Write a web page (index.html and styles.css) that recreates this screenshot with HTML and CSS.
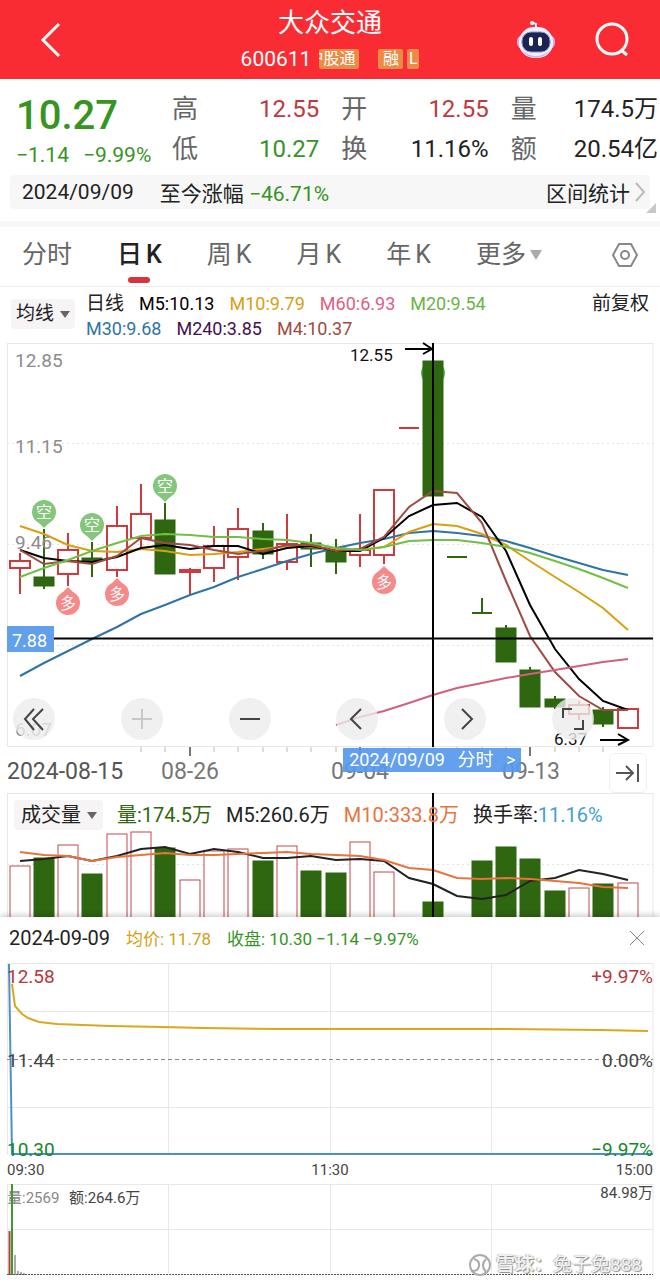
FILE: index.html
```html
<!DOCTYPE html>
<html lang="zh-CN">
<head>
    <meta charset="UTF-8">
    <meta name="viewport" content="width=device-width, initial-scale=1.0">
    <title>大众交通 600611</title>
    <link rel="stylesheet" href="styles.css">
</head>
<body>
    <header class="topbar">
        <button class="icon-btn back" aria-label="返回">
            <svg width="22" height="36" viewBox="0 0 22 36"><path d="M19 2 L3 18 L19 34" fill="none" stroke="#fff" stroke-width="3"/></svg>
        </button>
        <div class="title">
            <h1>大众交通</h1>
            <div class="code">
                <span>600611</span>
                <span class="tag tag-first">沪股通</span>
                <span class="tag">融</span>
                <span class="tag tag-last">L</span>
            </div>
        </div>
        <div class="actions">
            <button class="icon-btn" aria-label="智能助手">
                <svg width="40" height="40" viewBox="0 0 40 40">
                    <path d="M20 9 L20 4 L17 3" fill="none" stroke="#f3eaff" stroke-width="2"/>
                    <circle cx="16" cy="3" r="2" fill="#fff"/>
                    <rect x="1" y="15" width="38" height="14" rx="6" fill="#c5b4f2"/>
                    <rect x="3" y="7" width="34" height="31" rx="15" fill="#f4effd"/>
                    <path d="M6 30 Q20 42 34 30 Q28 38 20 38 Q11 38 6 30" fill="#c9bdf0"/>
                    <rect x="6" y="12" width="28" height="20" rx="9" fill="#1c2450" stroke="#8c8fdc"/>
                    <rect x="13" y="17" width="4" height="9" rx="2" fill="#fff"/>
                    <rect x="22" y="17" width="4" height="9" rx="2" fill="#fff"/>
                </svg>
            </button>
            <button class="icon-btn" aria-label="搜索">
                <svg width="36" height="36" viewBox="0 0 36 36"><circle cx="18" cy="17" r="15" fill="none" stroke="#fff" stroke-width="3"/><path d="M27 28 L33 33" stroke="#fff" stroke-width="3"/></svg>
            </button>
        </div>
    </header>

    <section class="quote">
        <div class="price">
            <strong>10.27</strong>
            <div class="change"><span>−1.14</span><span>−9.99%</span></div>
        </div>
        <dl>
            <div><dt>高</dt><dd class="up">12.55</dd></div>
            <div><dt>开</dt><dd class="up">12.55</dd></div>
            <div><dt>量</dt><dd>174.5万</dd></div>
            <div><dt>低</dt><dd class="down">10.27</dd></div>
            <div><dt>换</dt><dd>11.16%</dd></div>
            <div><dt>额</dt><dd>20.54亿</dd></div>
        </dl>
    </section>

    <div class="interval">
        <span>2024/09/09</span>
        <span class="since">至今涨幅 <b class="down">−46.71%</b></span>
        <a href="#stats">区间统计<svg width="12" height="22" viewBox="0 0 12 22"><path d="M2 2 L10 11 L2 20" fill="none" stroke="#bbb" stroke-width="2"/></svg></a>
        <i class="corner"></i>
    </div>

    <nav class="tabs">
        <button>分时</button>
        <button class="active"><span>日</span><span>K</span></button>
        <button><span>周</span><span>K</span></button>
        <button><span>月</span><span>K</span></button>
        <button><span>年</span><span>K</span></button>
        <button>更多<i class="caret"></i></button>
        <button class="settings" aria-label="设置">
            <svg width="28" height="28" viewBox="0 0 28 28" fill="none" stroke="#888" stroke-width="2"><path d="M8 3 H20 L26 14 L20 25 H8 L2 14 Z"/><circle cx="14" cy="14" r="4"/></svg>
        </button>
    </nav>

    <section class="legend">
        <button class="picker">均线<i class="caret"></i></button>
        <div class="averages">
            <span class="cycle">日线</span>
            <span class="m5">M5:10.13</span>
            <span class="m10">M10:9.79</span>
            <span class="m60">M60:6.93</span>
            <span class="m20">M20:9.54</span>
            <span class="m30">M30:9.68</span>
            <span class="m240">M240:3.85</span>
            <span class="m4">M4:10.37</span>
        </div>
        <span class="adjust">前复权</span>
    </section>

    <section class="kline">
        <svg class="chart" id="kline" viewBox="0 0 660 451"></svg>
        <div class="zoombar">
            <button aria-label="最早"><svg viewBox="0 0 42 42"><path d="M21 11 L12 21 L21 32 M30 11 L20 21 L30 32"/></svg></button>
            <button aria-label="放大" class="off"><svg viewBox="0 0 42 42"><path d="M11 21 H31 M21 11 V31"/></svg></button>
            <button aria-label="缩小"><svg viewBox="0 0 42 42"><path d="M11 21 H31"/></svg></button>
            <button aria-label="前一日"><svg viewBox="0 0 42 42"><path d="M25 11 L15 21 L25 31"/></svg></button>
            <button aria-label="后一日"><svg viewBox="0 0 42 42"><path d="M18 11 L28 21 L18 31"/></svg></button>
            <button aria-label="全屏"><svg viewBox="0 0 42 42"><path d="M11 20 V11 H20 M31 22 V31 H22"/></svg></button>
        </div>
        <button class="day-link"><span>2024/09/09</span><span>分时</span><span>&gt;</span></button>
        <button class="to-end" aria-label="最新"><svg width="28" height="24" viewBox="0 0 28 24" fill="none" stroke="#555" stroke-width="2"><path d="M2 12 H18 M12 5 L19 12 L12 19 M24 3 V21"/></svg></button>
    </section>

    <section class="volume">
        <svg class="chart" id="volume" viewBox="0 0 660 124"></svg>
        <div class="volume-legend">
            <button class="picker">成交量<i class="caret"></i></button>
            <span class="vol">量:174.5万</span>
            <span>M5:260.6万</span>
            <span class="vm10">M10:333.8万</span>
            <span>换手率:<b class="rate">11.16%</b></span>
        </div>
    </section>

    <section class="intraday">
        <div class="intraday-head">
            <span class="day">2024-09-09</span>
            <span class="m10">均价: 11.78</span>
            <span class="down">收盘: 10.30 −1.14 −9.97%</span>
            <button aria-label="关闭"><svg width="16" height="16" viewBox="0 0 16 16"><path d="M1 1 L15 15 M15 1 L1 15" stroke="#888" stroke-width="1"/></svg></button>
        </div>
        <svg class="chart" viewBox="0 0 660 198">
            <path class="frame" d="M7 3.5 H653 M7 51.5 H653 M7 147.5 H653 M7.5 3 V195 M168.5 3 V195 M330.5 3 V195 M491.5 3 V195 M653 3 V195"/>
            <path d="M7 99.5 H653" stroke="#888" stroke-dasharray="4 3"/>
            <polyline class="line" stroke="#d8a81f" points="12,24 15,46 22,54 28,58 39,62 57,64 83,65 110,66 163,67 203,68 277,69 503,69 600,70 648,71"/>
            <polyline class="line" stroke="#4d90c8" points="9,4 12,194 653,194"/>
            <text class="scale up" x="7" y="23">12.58</text>
            <text class="scale" x="7" y="107">11.44</text>
            <text class="scale low" x="7" y="196">10.30</text>
            <text class="scale up end" x="653" y="23">+9.97%</text>
            <text class="scale end" x="653" y="107">0.00%</text>
            <text class="scale low end" x="653" y="196">−9.97%</text>
        </svg>
        <div class="times"><span>09:30</span><span>11:30</span><span>15:00</span></div>
        <div class="turnover">
            <svg class="chart" viewBox="0 0 660 94">
                <path class="frame" d="M7 2.5 H653 M7 47.5 H653 M7.5 2 V92 M168.5 2 V92 M330.5 2 V92 M491.5 2 V92 M653 2 V92"/>
                <path d="M7 92.5 H653" stroke="#555" stroke-dasharray="2 1"/>
                <path d="M9.5 49 V93" stroke="#b0413a" stroke-width="2"/>
                <path d="M15 73 V93 M18 89 V93 M21 90 V93 M24 91 V93" stroke="#555" stroke-width="1"/>
                <text class="note dim" x="7" y="21">量:2569</text>
                <text class="note" x="69" y="21">额:264.6万</text>
                <text class="note end" x="653" y="16">84.98万</text>
                <path d="M12 2 V93" stroke="#3d9a2c" stroke-width="2"/>
            </svg>
            <div class="watermark">
                <svg width="24" height="24" viewBox="0 0 24 24" fill="none" stroke="#aaa" stroke-width="2"><circle cx="12" cy="12" r="10"/><path d="M6 6 Q12 8 11 13 Q10 18 5 18 M18 6 Q12 12 18 19"/></svg>
                <b>雪球：</b><span>兔子兔888</span>
            </div>
        </div>
    </section>

    <script>
        // x of the first candle and the distance between two candles
        const X0 = 19.5;
        const STEP = 24.33;
        const RED = '#d03a3c';
        const GREEN = '#2f6610';
        const x = i => Math.round(X0 + i * STEP);

        // [colour, high, body top, body bottom, low]
        const candles = [
            ['r', 211, 219, 226, 252], ['g', 187, 235, 244, 247], ['r', 191, 208, 232, 244],
            ['g', 200, 216, 219, 235], ['r', 164, 184, 228, 235], ['r', 142, 172, 196, 207],
            ['g', 161, 178, 232, 232], ['r', 226, 228, 230, 252], ['r', 184, 204, 226, 240],
            ['r', 166, 187, 215, 238], ['g', 181, 189, 212, 217], ['r', 172, 202, 220, 228],
            ['g', 192, 201, 207, 225], ['g', 197, 206, 220, 232], ['r', 172, 208, 213, 225],
            ['r', 148, 148, 213, 222], ['r', 86, 86, 86, 86], ['g', 19, 19, 154, 154],
            ['g', 215, 215, 215, 215], ['g', 256, 271, 271, 271], ['g', 283, 286, 320, 320],
            ['g', 325, 328, 365, 365], ['g', 354, 357, 365, 367], ['r', 359, 363, 372, 378],
            ['g', 365, 368, 382, 385], ['r', 367, 367, 386, 386]
        ];

        const averages = {
            '#2f74a5': [334, 321, 309, 297, 285, 272, 263, 253, 245, 235, 227, 219, 212, 206, 201, 197, 191, 189, 191, 194, 199, 206, 214, 221, 228, 233],
            '#d8a010': [184, 192, 203, 209, 210, 207, 209, 213, 212, 210, 207, 204, 205, 207, 208, 205, 190, 182, 184, 192, 203, 219, 235, 250, 266, 288],
            '#000': [208, 216, 219, 220, 215, 206, 203, 207, 204, 204, 212, 206, 204, 209, 209, 196, 174, 163, 161, 175, 209, 263, 307, 337, 359, 368],
            '#a04a40': [208, 222, 219, 222, 214, 196, 201, 203, 208, 212, 209, 203, 203, 209, 207, 195, 165, 149, 151, 181, 239, 294, 330, 354, 368, 368],
            '#72bf44': [235, 226, 218, 209, 201, 194, 192, 193, 195, 195, 197, 198, 201, 206, 208, 205, 199, 198, 198, 201, 205, 211, 219, 227, 236, 246]
        };
        const m60 = [375, 369, 361, 353, 346, 341, 336, 332, 328, 324, 320, 317];

        const volumes = [73, 65, 52, 81, 41, 39, 55, 87, 58, 56, 68, 53, 78, 80, 49, 79, 0, 109, 0, 68, 54, 66, 98, 95, 91, 90];
        const volumeM5 = [68, 66, 63, 68, 63, 56, 54, 61, 56, 59, 65, 65, 63, 67, 66, 68, 85, 91, 103, 106, 102, 88, 85, 77, 81, 87];
        const volumeM10 = [59, 62, 63, 68, 64, 62, 60, 62, 62, 61, 60, 59, 61, 62, 63, 67, 75, 77, 85, 86, 85, 86, 88, 90, 94, 95];

        function line(values, color, start = 0) {
            const points = values.map((v, i) => `${x(i + start)},${v}`).join(' ');
            return `<polyline class="average" stroke="${color}" points="${points}"/>`;
        }

        function candle([type, high, top, bottom, low], i) {
            const color = type === 'r' ? RED : GREEN;
            const fill = type === 'r' ? '#fff' : GREEN;
            const cx = x(i);
            let out = `<path d="M${cx} ${high} V${low}" stroke="${color}" stroke-width="2"/>`;
            if (top === bottom) {
                return out + `<path d="M${cx - 10} ${top} H${cx + 10}" stroke="${color}" stroke-width="2"/>`;
            }
            return out + `<rect x="${cx - 10}" y="${top}" width="20" height="${bottom - top}" fill="${fill}" stroke="${color}" stroke-width="${type === 'r' ? 2 : 1}"/>`;
        }

        // round marker with a small tip towards its candle
        function marker(i, cy, word) {
            const up = word === '多';
            const cx = x(i);
            const tip = up ? cy - 16 : cy + 16;
            const base = up ? cy - 10 : cy + 10;
            return `<g fill="${up ? '#f68a8a' : '#84c67c'}"><circle cx="${cx}" cy="${cy}" r="12"/>` +
                `<path d="M${cx - 6} ${base} L${cx} ${tip} L${cx + 6} ${base} Z"/></g>` +
                `<text class="marker" x="${cx}" y="${cy + 6}">${word}</text>`;
        }

        function drawKline() {
            let out = '<path class="frame" d="M7 1.5 H653 M7 404.5 H653 M7.5 1 V404 M653 1 V404"/>';
            out += '<path d="M7 101.5 H653 M7 202.5 H653 M7 303.5 H653" stroke="#e4e4e4" stroke-dasharray="2 3"/>';
            out += `<circle cx="${x(17)}" cy="31" r="12" fill="#5cb850"/>`;
            out += candles.map(candle).join('');
            out += Object.entries(averages).map(([color, values]) => line(values, color)).join('');
            out += '<path d="M336 383 L360 375" stroke="#d0607c" stroke-width="2"/>' + line(m60, '#d0607c', 14);
            [['12.85', 25], ['11.15', 111], ['9.46', 207], ['6.07', 394]].forEach(([t, y]) => {
                out += `<text class="price-label" x="15" y="${y}">${t}</text>`;
            });
            out += marker(1, 170, '空') + marker(3, 183, '空') + marker(6, 144, '空');
            out += marker(2, 261, '多') + marker(4, 252, '多') + marker(15, 240, '多');
            // high and low of the visible range
            out += '<text class="extreme" x="350" y="19">12.55</text><path class="arrow" d="M405 7 H431 M423 1 L432 7 L423 12"/>';
            out += '<text class="extreme" x="554" y="403">6.37</text><path class="arrow" d="M600 398 H627 M618 392 L628 398 L618 403"/>';
            // crosshair
            out += `<path d="M7 296.5 H653 M${x(17)} 1 V405" stroke="#000" stroke-width="2"/>`;
            out += '<rect x="7" y="284" width="47" height="26" fill="#62a0ec"/><text class="cross-label" x="12" y="305">7.88</text>';
            // date axis
            for (let i = 5; i < 25; i++) {
                out += `<path d="M${x(i)} 405 v${i % 7 ? 5 : 9}" stroke="${i % 7 ? '#bbb' : '#777'}" stroke-width="${i % 7 ? 1 : 2}"/>`;
            }
            out += '<text class="date first" x="7" y="437">2024-08-15</text>';
            [['08-26', 190], ['09-04', 360], ['09-13', 531]].forEach(([t, cx]) => {
                out += `<text class="date" x="${cx}" y="437">${t}</text>`;
            });
            document.getElementById('kline').innerHTML = out;
        }

        function drawVolume() {
            let out = '<path class="frame" d="M7 0.5 H653 M7.5 0 V124 M653 0 V124"/>';
            out += '<path d="M7 71.5 H653" stroke="#e4e4e4" stroke-dasharray="2 3"/>';
            volumes.forEach((top, i) => {
                if (!top) return;
                const red = candles[i][0] === 'r';
                out += `<rect x="${x(i) - 10}" y="${top}" width="20" height="${130 - top}" fill="${red ? '#fff' : GREEN}" stroke="${red ? '#c4484c' : GREEN}"/>`;
            });
            out += line(volumeM5, '#222') + line(volumeM10, '#e8733c');
            out += `<path d="M${x(17)} 0 V124" stroke="#000" stroke-width="2"/>`;
            document.getElementById('volume').innerHTML = out;
        }

        drawKline();
        drawVolume();
    </script>
</body>
</html>
```
FILE: styles.css
```css
* {
    box-sizing: border-box;
}

body {
    margin: 0;
    background: #fff;
    color: #222;
    font-family: Roboto, "Noto Sans CJK SC", sans-serif;
    font-size: 18px;
}

button {
    padding: 0;
    border: none;
    background: none;
    color: inherit;
    font: inherit;
    cursor: pointer;
}

b {
    font-weight: normal;
}

.up { color: #c0393d; fill: #c0393d; }
.down { color: #35951f; }
.low { fill: #15891f; }

/* top bar */
.topbar {
    display: grid;
    grid-template-columns: 1fr auto 1fr;
    align-items: center;
    height: 79px;
    padding: 0 30px;
    background: #fa2c33;
    color: #fff;
}

.icon-btn {
    display: flex;
}

.back {
    padding-left: 10px;
}

.title {
    display: flex;
    flex-direction: column;
    align-items: center;
}

h1 {
    margin: 0;
    font-size: 26px;
    font-weight: 400;
    line-height: 38px;
}

.code {
    display: flex;
    align-items: center;
    height: 34px;
    font-size: 21px;
}

.tag {
    display: flex;
    justify-content: center;
    width: 25px;
    height: 20px;
    margin-right: 4px;
    overflow: hidden;
    border-radius: 2px;
    background: #ea8c46;
    font-size: 16px;
    line-height: 20px;
    white-space: nowrap;
}

.tag-first {
    justify-content: flex-end;
    width: 40px;
    margin: 0 19px 0 8px;
    padding-right: 4px;
}

.tag-last {
    width: 12px;
    margin-right: 0;
}

.actions {
    display: flex;
    justify-content: flex-end;
    align-items: center;
    gap: 38px;
}

/* quote */
.quote {
    display: grid;
    grid-template-columns: 150px 1fr;
    gap: 22px;
    padding: 10px 2px 6px 0;
}

.price {
    padding-left: 16px;
    color: #35951f;
    white-space: nowrap;
}

.price strong {
    display: block;
    font-size: 40px;
    font-weight: 500;
    line-height: 54px;
}

.change {
    display: flex;
    gap: 14px;
    font-size: 21px;
    line-height: 24px;
}

dl {
    display: grid;
    grid-template-columns: repeat(3, 1fr);
    column-gap: 22px;
    margin: 0;
    font-size: 26px;
    line-height: 40px;
}

dl div {
    display: flex;
    justify-content: space-between;
}

dt {
    color: #666;
}

dd {
    margin: 0;
    font-size: 24px;
    white-space: nowrap;
}

.interval {
    position: relative;
    display: flex;
    align-items: center;
    height: 34px;
    margin: 0 10px 12px;
    padding: 0 4px 0 12px;
    border-radius: 4px;
    background: #f7f7f7;
    font-size: 21px;
}

.since {
    margin-left: 26px;
}

.interval a {
    display: flex;
    align-items: center;
    gap: 4px;
    margin-left: auto;
    color: inherit;
    text-decoration: none;
}

.corner {
    position: absolute;
    right: -6px;
    bottom: -4px;
    border-left: 10px solid transparent;
    border-bottom: 10px solid #c8c8c8;
}

/* period tabs */
.tabs {
    display: flex;
    align-items: center;
    gap: 45px;
    height: 66px;
    padding: 0 21px 4px 22px;
    border-top: 6px solid #f7f7f7;
    border-bottom: 1px solid #ececec;
    color: #666;
    font-size: 25px;
}

.tabs button {
    display: flex;
    align-items: baseline;
    gap: 4px;
    line-height: 36px;
    white-space: nowrap;
}

.tabs .active {
    position: relative;
    color: #222;
    font-weight: 500;
}

.active::after {
    content: "";
    position: absolute;
    left: 50%;
    bottom: -10px;
    width: 22px;
    height: 6px;
    margin-left: -11px;
    border-radius: 3px;
    background: #d8353a;
}

.tabs .settings {
    margin-left: auto;
}

.caret {
    align-self: center;
    border: 6px solid transparent;
    border-top: 10px solid #aaa;
    border-bottom: 0;
}

/* moving averages */
.legend {
    display: flex;
    align-items: flex-start;
    height: 55px;
    padding: 4px 11px 0;
    font-size: 19px;
}

.picker {
    display: flex;
    align-items: center;
    gap: 6px;
    padding: 0 5px;
    border-radius: 4px;
    background: #f6f4f5;
    line-height: 30px;
    white-space: nowrap;
}

.picker .caret {
    border-width: 7px 5px 0;
    border-top-color: #666;
}

.legend .picker {
    margin-top: 8px;
}

.averages {
    display: flex;
    flex: 1;
    flex-wrap: wrap;
    column-gap: 15px;
    max-width: 430px;
    margin-left: 11px;
    font-size: 18px;
    line-height: 25px;
}

.cycle { font-size: 19px; }
.m5 { color: #000; }
.m10 { color: #d6a012; }
.m20 { color: #69b544; }
.m30 { color: #2f74a5; }
.m60 { color: #e0607f; }
.m240 { color: #44104e; }
.m4 { color: #a04a40; }

.adjust {
    margin-left: auto;
    line-height: 25px;
}

/* charts */
.chart {
    display: block;
    width: 100%;
    height: auto;
}

.frame {
    fill: none;
    stroke: #e8e8e8;
}

.average, .line {
    fill: none;
    stroke-width: 2;
}

.price-label {
    fill: #8c8c8c;
    font-size: 19px;
}

.marker {
    fill: #fff;
    font-size: 16px;
    text-anchor: middle;
}

.extreme {
    fill: #111;
    font-size: 17px;
}

.arrow {
    fill: none;
    stroke: #000;
    stroke-width: 2;
}

.cross-label {
    fill: #fff;
    font-size: 18px;
}

.date {
    fill: #777;
    font-size: 23px;
    text-anchor: middle;
}

.date.first {
    fill: #555;
    text-anchor: start;
}

.kline, .volume, .turnover {
    position: relative;
}

.zoombar {
    position: absolute;
    top: 79%;
    left: 2%;
    right: 10%;
    display: flex;
    justify-content: space-between;
}

.zoombar button {
    width: 42px;
    height: 42px;
    border-radius: 50%;
    background: rgba(236, 236, 236, 0.8);
}

.zoombar svg {
    display: block;
    fill: none;
    stroke: #444;
    stroke-width: 2;
}

.zoombar .off svg {
    stroke: #c8c8c8;
}

.day-link {
    position: absolute;
    top: 90%;
    left: 52%;
    display: flex;
    justify-content: space-between;
    width: 27%;
    height: 24px;
    padding: 0 6px;
    background: rgba(86, 152, 236, 0.92);
    color: #fff;
    font-size: 18px;
    line-height: 24px;
}

.to-end {
    position: absolute;
    right: 2%;
    bottom: 0;
    display: flex;
    align-items: center;
    justify-content: center;
    width: 38px;
    height: 40px;
    border: 1px solid #f0f0f0;
    border-radius: 6px;
    background: #fff;
}

.volume-legend {
    position: absolute;
    top: 7px;
    left: 14px;
    display: flex;
    gap: 14px;
    font-size: 20px;
    line-height: 30px;
    white-space: nowrap;
}

.volume-legend .picker {
    padding: 0 6px 0 7px;
}

.vol { color: #2f6610; }
.vm10 { color: #e8733c; }
.rate { color: #419fd5; }

/* intraday panel */
.intraday {
    position: relative;
    background: #fff;
    box-shadow: 0 -2px 6px rgba(0, 0, 0, 0.2);
}

.intraday-head {
    display: flex;
    align-items: center;
    gap: 16px;
    height: 43px;
    padding: 0 15px 2px 9px;
    font-size: 17px;
    white-space: nowrap;
}

.day {
    font-size: 20px;
}

.intraday-head button {
    display: flex;
    margin-left: auto;
}

.scale {
    fill: #444;
    font-size: 19px;
}

.scale.up { fill: #b8363c; }
.scale.low { fill: #15891f; }
.end { text-anchor: end; }

.times {
    display: flex;
    justify-content: space-between;
    padding: 0 7px;
    color: #444;
    font-size: 15px;
    line-height: 24px;
}

.note {
    fill: #444;
    font-size: 15px;
}

.dim {
    fill: #888;
}

.watermark {
    position: absolute;
    right: 18px;
    bottom: -1px;
    display: flex;
    align-items: center;
    color: #f2f2f2;
    font-size: 19px;
    line-height: 24px;
    text-shadow: 1px 1px 1px #888, -1px 0 1px #bbb;
}

.watermark b {
    margin-left: 4px;
    font-weight: 700;
}
```
